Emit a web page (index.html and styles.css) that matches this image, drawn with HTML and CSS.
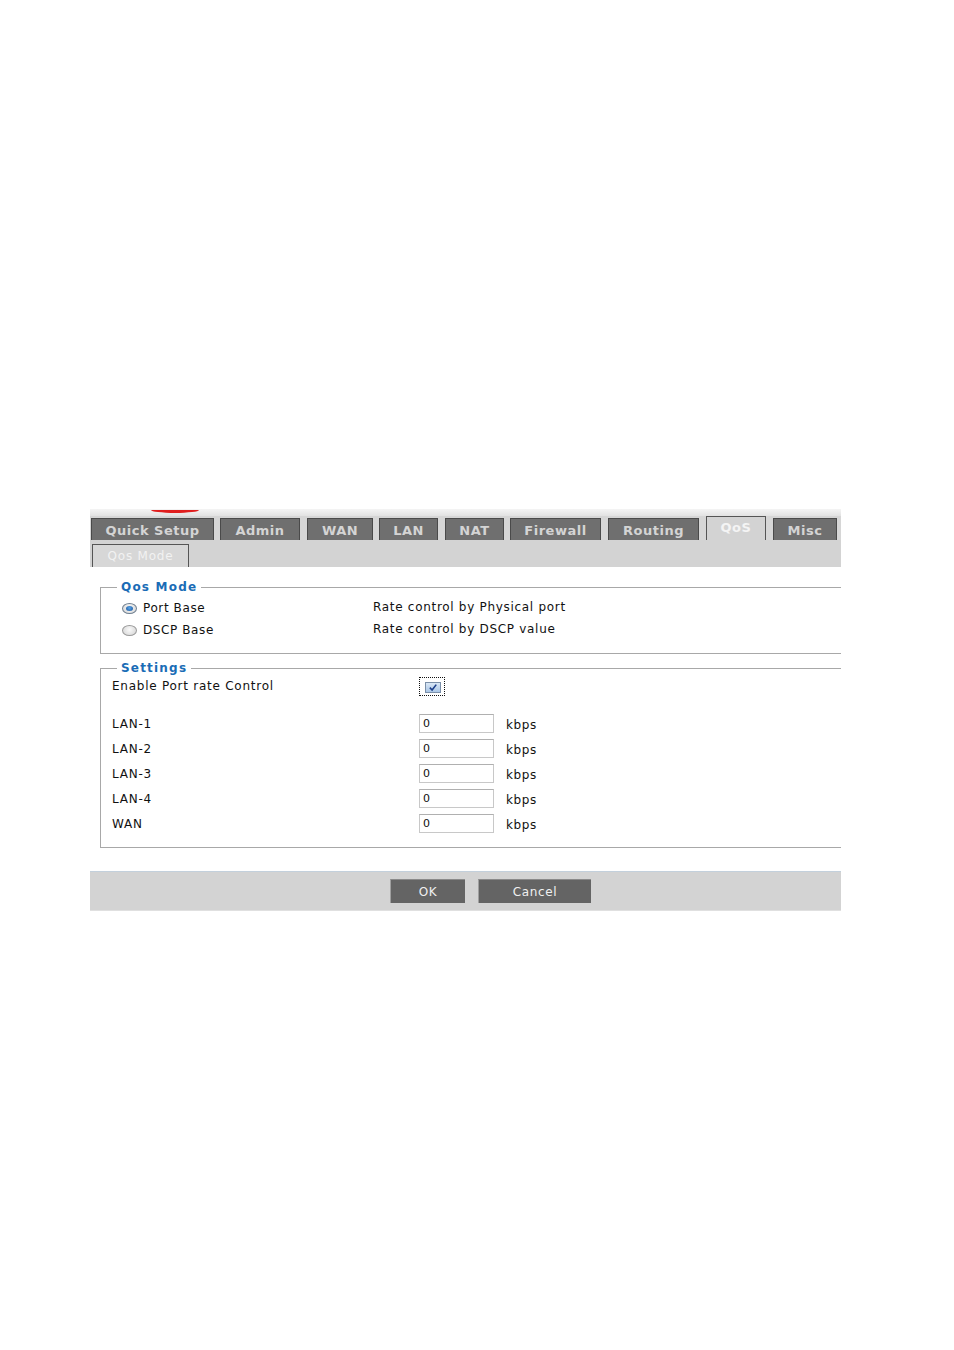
FILE: index.html
```html
<!DOCTYPE html>
<html>
<head>
<meta charset="utf-8">
<link rel="stylesheet" href="styles.css">
</head>
<body>
<div class="page">
  <div class="panel">
    <div class="strip"><span class="logo-arc"></span></div>
    <div class="tabbar">
      <div class="tab w-qs">Quick Setup</div>
      <div class="tab w-admin">Admin</div>
      <div class="tab w-wan">WAN</div>
      <div class="tab w-lan">LAN</div>
      <div class="tab w-nat">NAT</div>
      <div class="tab w-fw">Firewall</div>
      <div class="tab w-rt">Routing</div>
      <div class="tab active w-qos">QoS</div>
      <div class="tab w-misc">Misc</div>
    </div>
    <div class="subbar">
      <div class="subtab">Qos Mode</div>
    </div>

    <fieldset class="group g-mode">
      <legend>Qos Mode</legend>
      <div class="mrow">
        <div class="opt"><span class="radio on"></span>Port Base</div>
        <div class="desc">Rate control by Physical port</div>
      </div>
      <div class="mrow">
        <div class="opt"><span class="radio"></span>DSCP Base</div>
        <div class="desc">Rate control by DSCP value</div>
      </div>
    </fieldset>

    <fieldset class="group g-set">
      <legend>Settings</legend>
      <div class="srow enable-row">
        <div class="lbl">Enable Port rate Control</div>
        <span class="chk-focus"><span class="chk"><svg viewBox="0 0 10 10" width="10" height="9"><path d="M1.5 5.2 L4 7.8 L8.6 1.8" fill="none" stroke="#1d3f8a" stroke-width="1.8"/></svg></span></span>
      </div>
      <div class="rates">
        <div class="srow"><div class="lbl">LAN-1</div><span class="inp">0</span><span class="unit">kbps</span></div>
        <div class="srow"><div class="lbl">LAN-2</div><span class="inp">0</span><span class="unit">kbps</span></div>
        <div class="srow"><div class="lbl">LAN-3</div><span class="inp">0</span><span class="unit">kbps</span></div>
        <div class="srow"><div class="lbl">LAN-4</div><span class="inp">0</span><span class="unit">kbps</span></div>
        <div class="srow"><div class="lbl">WAN</div><span class="inp">0</span><span class="unit">kbps</span></div>
      </div>
    </fieldset>

    <div class="btnbar">
      <div class="btn ok">OK</div>
      <div class="btn cancel">Cancel</div>
    </div>
  </div>
</div>
</body>
</html>
```

FILE: styles.css
```css
html, body {
  margin: 0;
  padding: 0;
  background: #ffffff;
}
body {
  font-family: "DejaVu Sans", Verdana, sans-serif;
  font-size: 12px;
  color: #111;
}
.page {
  padding: 509px 0 0 90px;
}
.panel {
  width: 751px;
}
.strip {
  height: 7px;
  background: linear-gradient(#f4f4f4, #e2e2e2);
  display: flex;
}
.logo-arc {
  margin-left: 61px;
  width: 48px;
  height: 3px;
  margin-top: 1px;
  background: #e01e1e;
  border-radius: 0 0 24px 24px / 0 0 3px 3px;
}
.tabbar {
  height: 24px;
  background: #d6d6d6;
  display: flex;
  align-items: flex-end;
  padding-left: 1px;
  gap: 7px;
}
.tab {
  box-sizing: border-box;
  height: 22px;
  background: #6f6f6f;
  border: 1px solid #4a4a4a;
  border-bottom: none;
  color: #d4d4d4;
  font-weight: bold;
  font-size: 13px;
  letter-spacing: 0.5px;
  display: flex;
  align-items: center;
  justify-content: center;
  padding-top: 2px;
}
.tab.active {
  height: 24px;
  background: #d3d3d3;
  color: #f4f4f4;
  border-color: #555;
  padding-top: 0;
  padding-bottom: 3px;
}
.w-qs { width: 123px; }
.w-admin { width: 80px; margin-left: -1px; }
.w-wan { width: 66px; }
.w-lan { width: 59px; margin-left: -1px; }
.w-nat { width: 59px; }
.w-fw { width: 91px; margin-left: -1px; }
.w-rt { width: 91px; }
.w-qos { width: 60px; }
.w-misc { width: 64px; }
.subbar {
  height: 27px;
  background: #d3d3d3;
  display: flex;
  align-items: flex-end;
  padding-left: 2px;
}
.subtab {
  box-sizing: border-box;
  width: 97px;
  height: 23px;
  border: 1px solid #555;
  border-bottom: none;
  background: #d7d7d7;
  color: #f2f2f2;
  font-size: 12px;
  letter-spacing: 0.8px;
  display: flex;
  align-items: center;
  justify-content: center;
  padding-bottom: 1px;
}
.group {
  margin: 0 0 0 10px;
  border: 1px solid #a8a8a8;
  border-right: none;
  min-width: 0;
}
.group legend {
  padding: 0 4px;
  color: #1a6cb6;
  font-weight: bold;
  font-size: 12px;
  letter-spacing: 1.2px;
  line-height: 13px;
}
.g-mode {
  margin-top: 14px;
  padding: 3px 0 12px 21px;
}
.g-mode legend {
  margin-left: -5px;
}
.mrow {
  display: flex;
  align-items: center;
  height: 22px;
}
.opt {
  width: 251px;
  display: flex;
  align-items: center;
  gap: 6px;
  letter-spacing: 0.6px;
}
.desc {
  letter-spacing: 0.7px;
  margin-top: -3px;
}
.radio {
  width: 15px;
  height: 11px;
  border-radius: 50%;
  box-sizing: border-box;
  border: 1px solid #9a9a9a;
  background: radial-gradient(circle at 50% 40%, #fafafa, #d2d2d2);
  display: inline-flex;
  align-items: center;
  justify-content: center;
}
.radio.on {
  border-color: #6f7f90;
}
.radio.on::after {
  content: "";
  width: 7px;
  height: 5px;
  border-radius: 50%;
  background: radial-gradient(circle at 50% 40%, #5aa6e8, #14509a);
}
.g-set {
  margin-top: 8px;
  padding: 1px 0 11px 11px;
}
.g-set legend {
  margin-left: 5px;
}
.srow {
  display: flex;
  align-items: center;
  height: 25px;
}
.enable-row {
  height: 20px;
}
.rates {
  margin-top: 15px;
}
.lbl {
  width: 307px;
  letter-spacing: 0.75px;
}
.chk-focus {
  display: inline-flex;
  padding: 4px 3px 2px 5px;
  border: 1px dotted #111;
}
.chk {
  width: 16px;
  height: 11px;
  box-sizing: border-box;
  border: 1px solid #7b8fa8;
  background: linear-gradient(#dbe8f6, #a9c6e6);
  display: flex;
  align-items: center;
  justify-content: center;
}
.inp {
  display: flex;
  align-items: center;
  box-sizing: border-box;
  width: 75px;
  height: 19px;
  border: 1px solid #c8c8c8;
  border-top-color: #b0b0b0;
  padding-left: 3px;
  font-size: 11px;
}
.unit {
  margin-left: 12px;
  padding-top: 3px;
  letter-spacing: 0.6px;
}
.btnbar {
  margin-top: 23px;
  height: 40px;
  box-sizing: border-box;
  background: #d3d3d3;
  border-top: 1px solid #c3d0dc;
  border-bottom: 1px solid #e0e0e0;
  display: flex;
  align-items: flex-start;
  padding: 7px 0 0 300px;
  gap: 13px;
}
.btn {
  box-sizing: border-box;
  height: 24px;
  background: #646464;
  border-left: 1px solid #a0a0a0;
  border-top: 1px solid #8a8a8a;
  color: #f0f0f0;
  font-size: 12px;
  letter-spacing: 0.6px;
  display: flex;
  align-items: center;
  justify-content: center;
}
.ok { width: 75px; }
.cancel { width: 113px; }
```
